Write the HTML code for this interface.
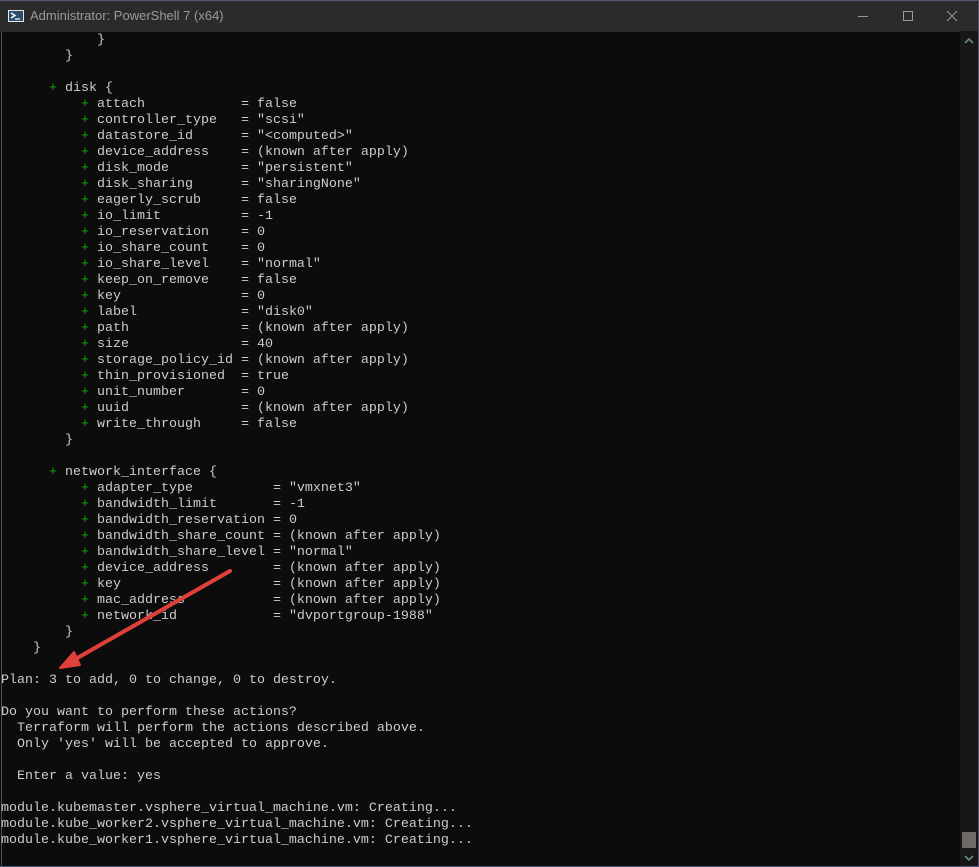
<!DOCTYPE html>
<html><head><meta charset="utf-8"><style>
html,body{margin:0;padding:0;width:979px;height:867px;overflow:hidden;background:#0c0c0c}
#tb{position:absolute;left:0;top:0;width:979px;height:31px;background:#2b2b2b;border-top:1px solid #5a5470}
#tb .t{position:absolute;left:30px;top:7px;font:13px "Liberation Sans",sans-serif;color:#9a9a9a}
#term{position:absolute;left:1px;top:32px;width:958px;height:834px;background:#0c0c0c;border-left:1px solid #4a5066}
pre{margin:0;font-family:"Liberation Mono",monospace;font-size:13.33px;line-height:16px;color:#cccccc;position:absolute;left:-1px;top:1px}
.g{color:#13a10e}
#sb{position:absolute;left:960px;top:31px;width:18px;height:835px;background:#171717}
#rb{position:absolute;left:978px;top:0;width:1px;height:867px;background:#5a5470}
#bb{position:absolute;left:0;top:866px;width:979px;height:1px;background:#4a5a80}
</style></head><body>
<div id="tb">
<svg style="position:absolute;left:8px;top:8px" width="16" height="14" viewBox="0 0 16 14"><rect x="0" y="1" width="16" height="12" fill="#e8e8e8"/><rect x="1" y="2" width="14" height="10" fill="#2f4e6e"/><path d="M3 4l4 2.5-4 2.5" stroke="#fff" stroke-width="1.4" fill="none"/><path d="M7 10h5" stroke="#fff" stroke-width="1.2"/></svg>
<div class="t">Administrator: PowerShell 7 (x64)</div>
<svg style="position:absolute;left:858px;top:9px" width="110" height="14"><path d="M0 6.5h10" stroke="#999"/><rect x="45.5" y="1.5" width="9" height="9" fill="none" stroke="#999"/><path d="M89 1l10 10M99 1l-10 10" stroke="#999"/></svg>
</div>
<div id="term"><pre>            }
        }

      <span class="g">+</span> disk {
          <span class="g">+</span> attach            = false
          <span class="g">+</span> controller_type   = "scsi"
          <span class="g">+</span> datastore_id      = "&lt;computed&gt;"
          <span class="g">+</span> device_address    = (known after apply)
          <span class="g">+</span> disk_mode         = "persistent"
          <span class="g">+</span> disk_sharing      = "sharingNone"
          <span class="g">+</span> eagerly_scrub     = false
          <span class="g">+</span> io_limit          = -1
          <span class="g">+</span> io_reservation    = 0
          <span class="g">+</span> io_share_count    = 0
          <span class="g">+</span> io_share_level    = "normal"
          <span class="g">+</span> keep_on_remove    = false
          <span class="g">+</span> key               = 0
          <span class="g">+</span> label             = "disk0"
          <span class="g">+</span> path              = (known after apply)
          <span class="g">+</span> size              = 40
          <span class="g">+</span> storage_policy_id = (known after apply)
          <span class="g">+</span> thin_provisioned  = true
          <span class="g">+</span> unit_number       = 0
          <span class="g">+</span> uuid              = (known after apply)
          <span class="g">+</span> write_through     = false
        }

      <span class="g">+</span> network_interface {
          <span class="g">+</span> adapter_type          = "vmxnet3"
          <span class="g">+</span> bandwidth_limit       = -1
          <span class="g">+</span> bandwidth_reservation = 0
          <span class="g">+</span> bandwidth_share_count = (known after apply)
          <span class="g">+</span> bandwidth_share_level = "normal"
          <span class="g">+</span> device_address        = (known after apply)
          <span class="g">+</span> key                   = (known after apply)
          <span class="g">+</span> mac_address           = (known after apply)
          <span class="g">+</span> network_id            = "dvportgroup-1988"
        }
    }

Plan: 3 to add, 0 to change, 0 to destroy.

Do you want to perform these actions?
  Terraform will perform the actions described above.
  Only 'yes' will be accepted to approve.

  Enter a value: yes

module.kubemaster.vsphere_virtual_machine.vm: Creating...
module.kube_worker2.vsphere_virtual_machine.vm: Creating...
module.kube_worker1.vsphere_virtual_machine.vm: Creating...</pre></div>
<svg style="position:absolute;left:0;top:0" width="979" height="867"><path d="M230 571L72 661" stroke="#e0403a" stroke-width="4" stroke-linecap="round"/><path d="M60 668L74 652L80 665Z" fill="#e0403a" stroke="#e0403a" stroke-width="2" stroke-linejoin="round"/></svg>
<div id="sb">
<svg style="position:absolute;left:4px;top:6px" width="10" height="8"><path d="M1 6l4-4 4 4" stroke="#6a8a80" stroke-width="1.6" fill="none"/></svg>
<div style="position:absolute;left:2px;top:801px;width:14px;height:16px;background:#6e6a66"></div>
<svg style="position:absolute;left:4px;top:823px" width="10" height="8"><path d="M1 2l4 4 4-4" stroke="#6a8a80" stroke-width="1.6" fill="none"/></svg>
</div>
<div id="rb"></div><div id="bb"></div>
</body></html>
